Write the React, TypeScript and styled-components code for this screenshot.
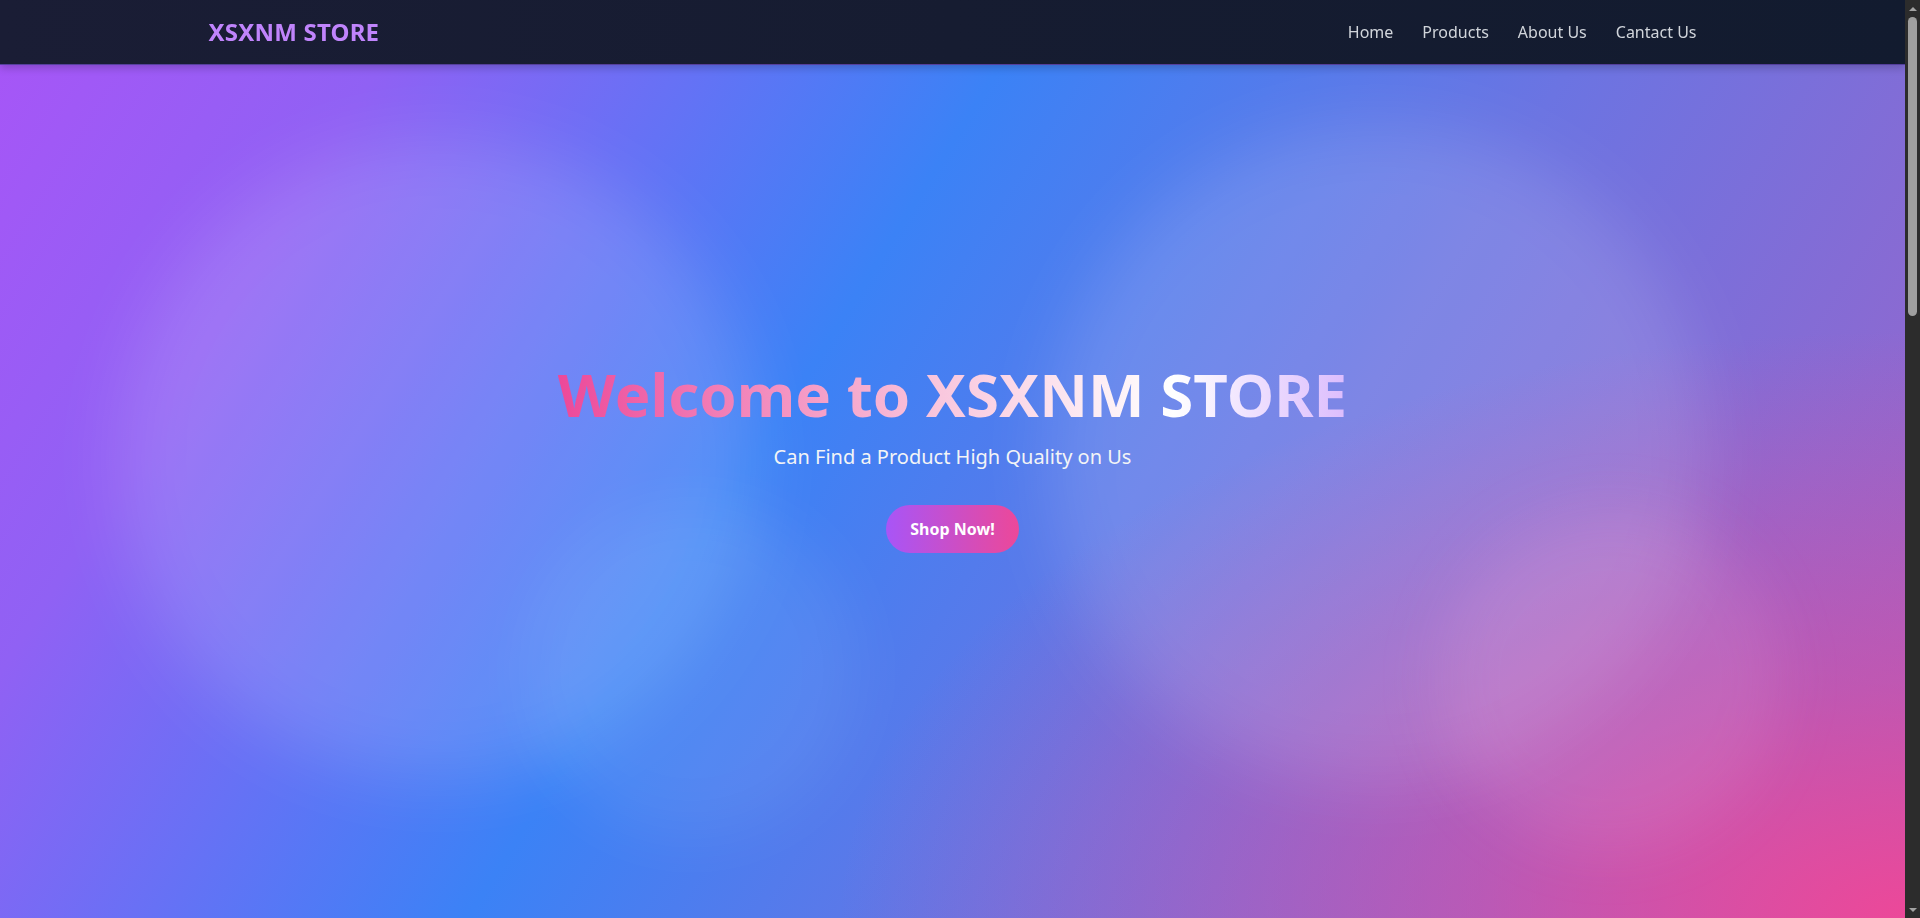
import React from "react";
import styled, { createGlobalStyle } from "styled-components";

const GlobalStyle = createGlobalStyle`
  * { box-sizing: border-box; }
  html, body { margin: 0; padding: 0; height: 100%; overflow: hidden; }
  body {
    font-family: "Noto Sans", "Open Sans", "Liberation Sans", sans-serif;
    background: #2c2c2c;
    color: #ffffff;
  }
  a { text-decoration: none; color: inherit; }
`;

/* Scrolling page; the right 15px are kept for the window scrollbar */
const Page = styled.div`
  height: 100vh;
  margin-right: 15px;
  overflow-y: auto;
  background: #111827;
  scrollbar-width: none;
  &::-webkit-scrollbar { display: none; }
`;

/* Window scrollbar drawn over the right edge, as the browser shows it */
const ScrollTrack = styled.div`
  position: fixed;
  top: 0;
  right: 0;
  bottom: 0;
  width: 15px;
  z-index: 60;
  background: #2c2c2c;
  display: flex;
  flex-direction: column;
  align-items: center;
`;

const ScrollArrow = styled.div<{ $down?: boolean }>`
  height: 17px;
  width: 15px;
  flex: none;
  display: flex;
  align-items: center;
  justify-content: center;
  &::before {
    content: "";
    width: 0;
    height: 0;
    border-left: 4px solid transparent;
    border-right: 4px solid transparent;
    ${(p) =>
      p.$down
        ? "border-top: 4px solid #a3a3a3;"
        : "border-bottom: 4px solid #a3a3a3;"}
  }
`;

const ScrollThumb = styled.div`
  width: 9px;
  height: 299px;
  flex: none;
  border-radius: 5px;
  background: #9f9f9f;
`;

const ScrollSpacer = styled.div`
  flex: 1;
`;

const NavBar = styled.nav`
  position: fixed;
  top: 0;
  left: 0;
  right: 15px;
  z-index: 50;
  height: 65px;
  background: linear-gradient(90deg, #1a1d35 0%, #161c31 50%, #121b2f 100%);
  border-bottom: 1px solid rgba(139, 92, 246, 0.55);
  box-shadow: 0 3px 8px rgba(0, 0, 0, 0.2);
`;

const NavInner = styled.div`
  max-width: 1536px;
  height: 100%;
  margin: 0 auto;
  padding: 0 24px;
  display: flex;
  align-items: center;
  justify-content: space-between;
`;

const Logo = styled.a`
  font-size: 24px;
  font-weight: 700;
  color: #c084fc;
  letter-spacing: 0.2px;
  line-height: 32px;
`;

const NavLinks = styled.ul`
  list-style: none;
  margin: 0;
  padding: 0;
  display: flex;
  gap: 29px;
`;

const NavLink = styled.a`
  font-size: 16px;
  line-height: 24px;
  color: #d1d5db;
`;

const Hero = styled.section`
  position: relative;
  min-height: 918px;
  display: flex;
  align-items: center;
  justify-content: center;
  overflow: hidden;
  background:
    radial-gradient(
      ellipse 56% 64% at 100% 100%,
      rgba(236, 72, 153, 1) 0%,
      rgba(236, 72, 153, 0.5) 40%,
      rgba(236, 72, 153, 0) 100%
    ),
    linear-gradient(
      122deg,
      #a855f7 0%,
      #9061f4 17%,
      #3b82f6 42%,
      #6b74e2 65%,
      #8a6ad2 85%,
      #9a64c6 100%
    );
`;

const Blob = styled.div<{ $x: string; $y: string; $size: number; $color: string; $blur: number }>`
  position: absolute;
  left: ${(p) => p.$x};
  top: ${(p) => p.$y};
  width: ${(p) => p.$size}px;
  height: ${(p) => p.$size}px;
  margin-left: ${(p) => -p.$size / 2}px;
  margin-top: ${(p) => -p.$size / 2}px;
  border-radius: 50%;
  background: ${(p) => p.$color};
  filter: blur(${(p) => p.$blur}px);
  pointer-events: none;
`;

const HeroContent = styled.div`
  position: relative;
  z-index: 1;
  display: flex;
  flex-direction: column;
  align-items: center;
  text-align: center;
  margin-top: -2px;
`;

const Title = styled.h1`
  margin: 0 0 19px;
  font-size: 60px;
  line-height: 60px;
  font-weight: 700;
  display: inline-block;
  background: linear-gradient(90deg, #ec4899 0%, #f9c6dd 48%, #ffffff 78%, #dcbcfd 100%);
  -webkit-background-clip: text;
  background-clip: text;
  color: transparent;
`;

const Subtitle = styled.p`
  margin: 0 0 34px;
  font-size: 20px;
  line-height: 28px;
  color: #f3f4f6;
`;

const ShopButton = styled.a`
  display: inline-flex;
  align-items: center;
  justify-content: center;
  height: 48px;
  padding: 0 24px;
  border-radius: 9999px;
  background: linear-gradient(90deg, #a855f7 0%, #ec4899 100%);
  color: #ffffff;
  font-size: 16px;
  font-weight: 700;
`;

const Section = styled.section<{ $bg: string }>`
  background: ${(p) => p.$bg};
  padding: 120px 24px;
`;

const SectionInner = styled.div`
  max-width: 1488px;
  margin: 0 auto;
`;

const SectionTitle = styled.h2`
  margin: 0 0 40px;
  font-size: 36px;
  font-weight: 700;
  text-align: center;
  color: #c084fc;
`;

const ProductGrid = styled.div`
  display: grid;
  grid-template-columns: repeat(4, 1fr);
  gap: 24px;
`;

const ProductCard = styled.div`
  background: #1f2937;
  border-radius: 12px;
  overflow: hidden;
  display: flex;
  flex-direction: column;
`;

const ProductImage = styled.div`
  height: 220px;
  background: linear-gradient(135deg, #6d28d9, #db2777);
`;

const ProductBody = styled.div`
  padding: 16px;
  display: flex;
  flex-direction: column;
  gap: 8px;
`;

const ProductName = styled.h3`
  margin: 0;
  font-size: 18px;
  color: #f9fafb;
`;

const ProductPrice = styled.span`
  font-size: 16px;
  color: #f472b6;
  font-weight: 700;
`;

const Paragraph = styled.p`
  max-width: 760px;
  margin: 0 auto;
  font-size: 18px;
  line-height: 30px;
  color: #d1d5db;
  text-align: center;
`;

const Footer = styled.footer`
  background: #0b1120;
  padding: 32px 24px;
  text-align: center;
  color: #9ca3af;
  font-size: 14px;
`;

const products = [
  { name: "Classic Hoodie", price: "$49.00" },
  { name: "Street Sneakers", price: "$89.00" },
  { name: "Canvas Backpack", price: "$39.00" },
  { name: "Smart Watch", price: "$129.00" },
  { name: "Denim Jacket", price: "$69.00" },
  { name: "Wireless Earbuds", price: "$59.00" },
  { name: "Sunglasses", price: "$25.00" },
  { name: "Leather Wallet", price: "$29.00" },
];

export default function App() {
  return (
    <>
      <GlobalStyle />
      <Page>
        <NavBar>
          <NavInner>
            <Logo href="#">XSXNM STORE</Logo>
            <NavLinks>
              <li><NavLink href="#">Home</NavLink></li>
              <li><NavLink href="#products">Products</NavLink></li>
              <li><NavLink href="#about">About Us</NavLink></li>
              <li><NavLink href="#contact">Cantact Us</NavLink></li>
            </NavLinks>
          </NavInner>
        </NavBar>

        <Hero>
          <Blob $x="23%" $y="50%" $size={640} $color="rgba(255,255,255,0.13)" $blur={34} />
          <Blob $x="72.3%" $y="49.5%" $size={660} $color="rgba(255,255,255,0.13)" $blur={34} />
          <Blob $x="36.3%" $y="73%" $size={330} $color="rgba(255,255,255,0.07)" $blur={30} />
          <Blob $x="84.5%" $y="74%" $size={340} $color="rgba(255,200,230,0.12)" $blur={30} />
          <HeroContent>
            <Title>Welcome to XSXNM STORE</Title>
            <Subtitle>Can Find a Product High Quality on Us</Subtitle>
            <ShopButton href="#products">Shop Now!</ShopButton>
          </HeroContent>
        </Hero>

        <Section id="products" $bg="#111827">
          <SectionInner>
            <SectionTitle>Our Products</SectionTitle>
            <ProductGrid>
              {products.map((p) => (
                <ProductCard key={p.name}>
                  <ProductImage />
                  <ProductBody>
                    <ProductName>{p.name}</ProductName>
                    <ProductPrice>{p.price}</ProductPrice>
                  </ProductBody>
                </ProductCard>
              ))}
            </ProductGrid>
          </SectionInner>
        </Section>

        <Section id="about" $bg="#0f172a">
          <SectionInner>
            <SectionTitle>About Us</SectionTitle>
            <Paragraph>
              XSXNM STORE brings you carefully selected products with high quality at fair prices.
            </Paragraph>
          </SectionInner>
        </Section>

        <Section id="contact" $bg="#111827">
          <SectionInner>
            <SectionTitle>Cantact Us</SectionTitle>
            <Paragraph>Email: hello@xsxnm.store</Paragraph>
          </SectionInner>
        </Section>

        <Footer>© 2024 XSXNM STORE. All rights reserved.</Footer>
      </Page>

      <ScrollTrack aria-hidden="true">
        <ScrollArrow />
        <ScrollThumb />
        <ScrollSpacer />
        <ScrollArrow $down />
      </ScrollTrack>
    </>
  );
}
